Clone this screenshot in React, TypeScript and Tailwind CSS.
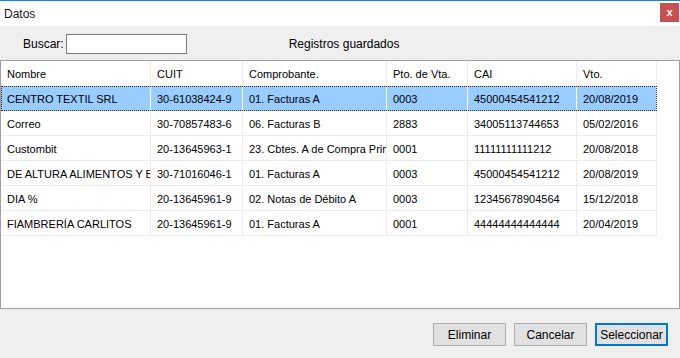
import React from 'react';

// Columnas de la grilla (ancho incluye la línea separadora derecha)
const columns = [
  { label: 'Nombre', width: 'w-[150px]' },
  { label: 'CUIT', width: 'w-[92px]' },
  { label: 'Comprobante.', width: 'w-[144px]' },
  { label: 'Pto. de Vta.', width: 'w-[81px]' },
  { label: 'CAI', width: 'w-[109px]' },
  { label: 'Vto.', width: 'w-[80px]' },
];

const rows = [
  ['CENTRO TEXTIL SRL', '30-61038424-9', '01. Facturas A', '0003', '45000454541212', '20/08/2019'],
  ['Correo', '30-70857483-6', '06. Facturas B', '2883', '34005113744653', '05/02/2016'],
  ['Custombit', '20-13645963-1', '23. Cbtes. A de Compra Primarias', '0001', '11111111111212', '20/08/2018'],
  ['DE ALTURA ALIMENTOS Y BEBIDAS SRL', '30-71016046-1', '01. Facturas A', '0003', '45000454541212', '20/08/2019'],
  ['DIA %', '20-13645961-9', '02. Notas de Débito A', '0003', '12345678904564', '15/12/2018'],
  ['FIAMBRERÍA CARLITOS', '20-13645961-9', '01. Facturas A', '0001', '44444444444444', '20/04/2019'],
];

function Row({ cells, selected, header }: { cells: string[]; selected?: boolean; header?: boolean }) {
  return (
    <div
      className={`flex w-[656px] h-[25px] ${selected ? 'bg-[#99ccff] outline outline-1 outline-dotted outline-[#3a2a1a] -outline-offset-1' : 'bg-white'}`}
    >
      {cells.map((c, i) => (
        <div
          key={i}
          className={`${columns[i].width} shrink-0 flex items-center pl-[6px] pt-[2px] overflow-hidden whitespace-nowrap border-r ${
            selected ? 'border-white' : 'border-[#ececec]'
          } ${header ? '' : selected ? '' : 'border-b border-b-[#ececec]'}`}
        >
          {c}
        </div>
      ))}
    </div>
  );
}

function Button({ children, primary }: { children: React.ReactNode; primary?: boolean }) {
  return (
    <button
      className={`h-[23px] w-[73px] bg-[#e1e1e1] text-[12px] text-black ${
        primary ? 'border-2 border-[#0078d7]' : 'border border-[#adadad]'
      }`}
    >
      {children}
    </button>
  );
}

export default function App() {
  return (
    <div
      className="w-[680px] h-[358px] flex flex-col bg-[#efefef] border-t border-[#1883d7] text-[12px] text-black overflow-hidden"
      style={{ fontFamily: '"Liberation Sans", Arial, sans-serif' }}
    >
      {/* Barra de título */}
      <div className="h-[25px] bg-white flex justify-between pl-[4px] pr-[1px]">
        <span className="text-[12px] text-[#1a1a1a] self-center">Datos</span>
        <div className="mt-[2px] w-[19px] h-[19px] bg-[#c75050] text-white text-[11px] font-bold flex items-center justify-center leading-none">
          x
        </div>
      </div>

      {/* Búsqueda */}
      <div className="h-[34px] flex items-center pt-[2px]">
        <span className="ml-[23px] text-[12px]">Buscar:</span>
        <input className="ml-[2px] w-[121px] h-[20px] bg-white border border-[#7a7a7a] outline-none" />
        <span className="ml-[102px] text-[12px]">Registros guardados</span>
      </div>

      {/* Grilla */}
      <div className="h-[249px] bg-white border border-[#a0a0a0] text-[11px]">
        <Row cells={columns.map((c) => c.label)} header />
        {rows.map((r, i) => (
          <Row key={i} cells={r} selected={i === 0} />
        ))}
      </div>

      {/* Botones */}
      <div className="flex justify-end gap-[8px] pr-[12px] mt-[14px]">
        <Button>Eliminar</Button>
        <Button>Cancelar</Button>
        <Button primary>Seleccionar</Button>
      </div>
    </div>
  );
}
